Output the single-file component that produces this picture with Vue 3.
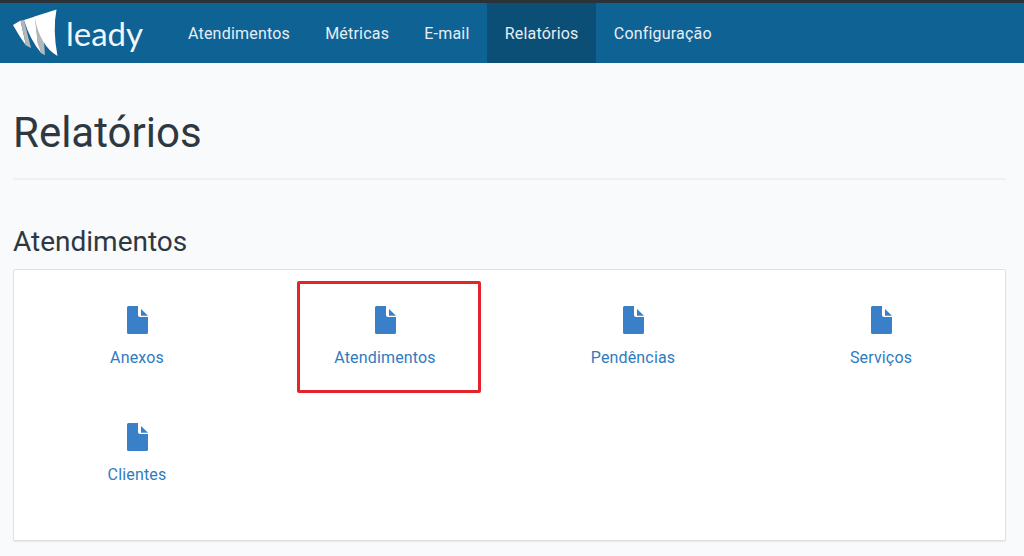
<script setup>
const navItems = [
  { label: 'Atendimentos' },
  { label: 'Métricas' },
  { label: 'E-mail' },
  { label: 'Relatórios', active: true },
  { label: 'Configuração' },
]
const reports = [
  { label: 'Anexos' },
  { label: 'Atendimentos', marked: true },
  { label: 'Pendências' },
  { label: 'Serviços' },
  { label: 'Clientes' },
]
</script>

<template>
  <div class="page">
    <header class="topbar">
      <div class="brand">
        <svg class="logo" width="46" height="50" viewBox="13 8 46 50">
          <path d="M13 25L20.500 20.500L26 45.500Q19 36 13 25Z" fill="#fff" />
          <path d="M20.500 20.500L24 20L31 48L26 45.500Z" fill="#b4b7ba" />
          <path d="M24 20L35 16.500L38 43L41.500 53.500Q30 40 24 20Z" fill="#fff" />
          <path d="M35 19L37.500 43L41.500 53.500L45 55L44 42Z" fill="#b4b7ba" />
          <path d="M34.500 16.500L56.500 9.500Q52.500 30 57.500 56Q40 46 34.500 16.500Z" fill="#fff" />
        </svg>
        <span class="brand-name">leady</span>
      </div>
      <nav class="nav">
        <a v-for="item in navItems" :key="item.label" class="nav-item" :class="{ active: item.active }">{{ item.label }}</a>
      </nav>
    </header>

    <main class="content">
      <h1 class="title">Relatórios</h1>
      <h2 class="section">Atendimentos</h2>
      <section class="card">
        <a v-for="r in reports" :key="r.label" class="tile" :class="{ marked: r.marked }">
          <svg class="file" width="21" height="28" viewBox="0 0 21 28">
            <path d="M1.500 0H11V9Q11 11 13 11H21V26.500Q21 28 19.500 28H1.500Q0 28 0 26.500V1.500Q0 0 1.500 0Z" fill="#3a80c8" />
            <path d="M14 3L21 9.700H14Z" fill="#3a80c8" />
          </svg>
          <span class="tile-label">{{ r.label }}</span>
        </a>
      </section>
    </main>
  </div>
</template>

<style>
html, body { margin: 0; background: #f9fafc; }
</style>

<style scoped>
.page {
  width: 1024px;
  height: 556px;
  overflow: hidden;
  background: #f9fafc;
  font-family: Roboto, "Liberation Sans", sans-serif;
}
.topbar {
  height: 60px;
  display: flex;
  align-items: stretch;
  background: #0f6294;
  border-top: 3px solid #2b3238;
}
.brand {
  width: 170px;
  padding-left: 13px;
  display: flex;
  align-items: center;
  box-sizing: border-box;
}
.logo { flex: none; }
.brand-name {
  margin-left: 7px;
  color: #f2f6f9;
  font-family: Lato, sans-serif;
  font-size: 33px;
  font-weight: 400;
  line-height: 1;
}
.nav { display: flex; }
.nav-item {
  padding: 0 17.6px;
  display: flex;
  align-items: center;
  color: #e6eef4;
  font-size: 16px;
  letter-spacing: 0.2px;
}
.nav-item:first-child { padding-left: 18px; }
.nav-item.active { background: #0b4f76; }
.content { padding: 0 18px 0 13px; }
.title {
  margin: 0;
  padding: 45px 0 20px;
  border-bottom: 2px solid #eef0f2;
  color: #2f3840;
  font-size: 42px;
  font-weight: 400;
  line-height: 50px;
}
.section {
  margin: 0;
  padding-top: 45px;
  color: #2f3840;
  font-size: 28px;
  font-weight: 400;
  line-height: 33px;
}
.card {
  margin-top: 11px;
  height: 272px;
  box-sizing: border-box;
  display: grid;
  grid-template-columns: repeat(4, 248px);
  grid-auto-rows: 117px;
  align-content: start;
  padding-top: 36px;
  background: #fff;
  border: 1px solid #dfe1e3;
  border-radius: 2px;
  box-shadow: 0 1px 1px #e6e7e9;
}
.tile {
  position: relative;
  display: flex;
  flex-direction: column;
  align-items: center;
  padding-right: 2px;
  color: #2f7bbf;
  font-size: 16px;
  letter-spacing: 0.16px;
}
.tile-label {
  margin-top: 14px;
  line-height: 19px;
}
.tile.marked::after {
  content: "";
  position: absolute;
  left: 35px;
  top: -25px;
  width: 178px;
  height: 106px;
  border: 3px solid #e3252b;
  border-radius: 2px;
}
</style>
